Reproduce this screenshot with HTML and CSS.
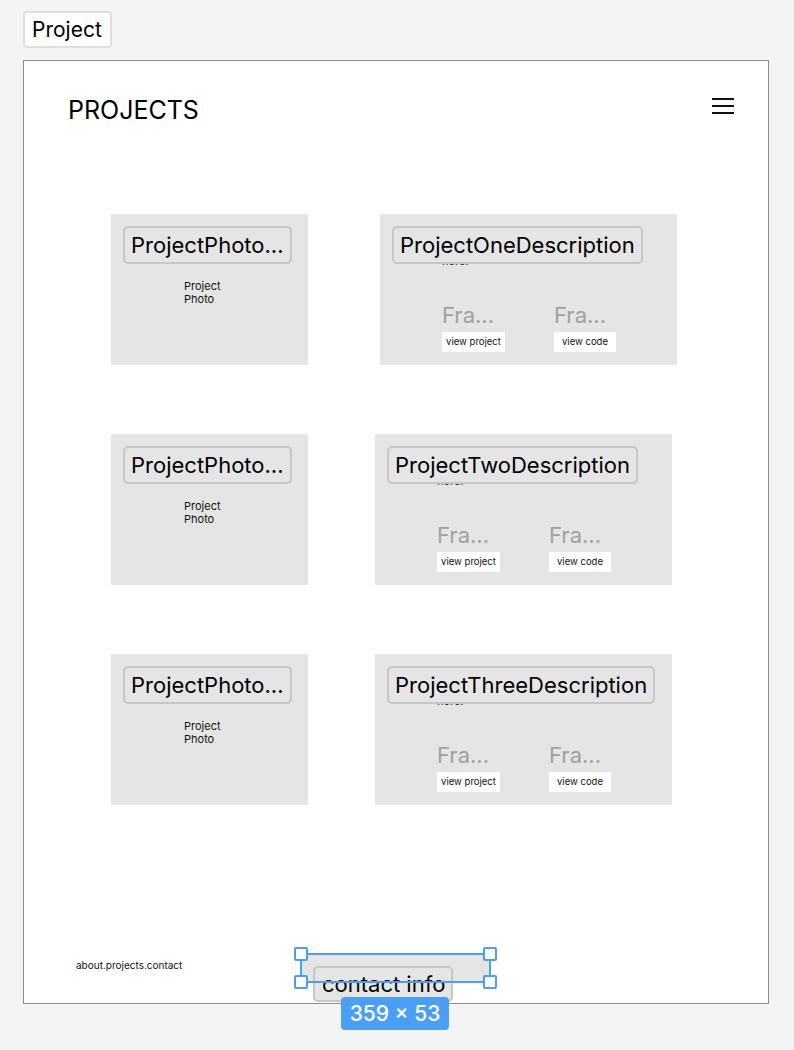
FILE: index.html
```html
<!DOCTYPE html>
<html lang="en">
<head>
<meta charset="utf-8">
<title>Project</title>
<link rel="stylesheet" href="styles.css">
</head>
<body>
  <div class="tab">Project</div>
  <div class="frame">
    <header class="header">
      <h1 class="title">PROJECTS</h1>
      <svg class="menu" width="22" height="16" viewBox="0 0 22 16" aria-hidden="true">
        <rect x="0" y="0" width="22" height="2" fill="#111"/>
        <rect x="0" y="7" width="22" height="2" fill="#111"/>
        <rect x="0" y="14" width="22" height="2" fill="#111"/>
      </svg>
    </header>

    <main class="list">
      <section class="row row-first">
        <div class="card photo">
          <div class="chip">ProjectPhoto...</div>
          <p class="photo-text">Project<br>Photo</p>
        </div>
        <div class="card desc">
          <div class="chip">ProjectOneDescription</div>
          <p class="blurb">here.</p>
          <div class="links">
            <div class="link"><div class="fra">Fra...</div><div class="btn">view project</div></div>
            <div class="link"><div class="fra">Fra...</div><div class="btn btn-code">view code</div></div>
          </div>
        </div>
      </section>

      <section class="row">
        <div class="card photo">
          <div class="chip">ProjectPhoto...</div>
          <p class="photo-text">Project<br>Photo</p>
        </div>
        <div class="card desc">
          <div class="chip">ProjectTwoDescription</div>
          <p class="blurb">here.</p>
          <div class="links">
            <div class="link"><div class="fra">Fra...</div><div class="btn">view project</div></div>
            <div class="link"><div class="fra">Fra...</div><div class="btn btn-code">view code</div></div>
          </div>
        </div>
      </section>

      <section class="row">
        <div class="card photo">
          <div class="chip">ProjectPhoto...</div>
          <p class="photo-text">Project<br>Photo</p>
        </div>
        <div class="card desc">
          <div class="chip">ProjectThreeDescription</div>
          <p class="blurb">here.</p>
          <div class="links">
            <div class="link"><div class="fra">Fra...</div><div class="btn">view project</div></div>
            <div class="link"><div class="fra">Fra...</div><div class="btn btn-code">view code</div></div>
          </div>
        </div>
      </section>
    </main>

    <footer class="footer">
      <p class="nav">about.projects.contact</p>
    </footer>

    <div class="sel-fill"></div>
    <div class="chip contact-chip">contact info</div>
    <div class="sel-box">
      <span class="handle h-tl"></span>
      <span class="handle h-tr"></span>
      <span class="handle h-bl"></span>
      <span class="handle h-br"></span>
    </div>
    <div class="dims">359 × 53</div>
  </div>
</body>
</html>
```

FILE: styles.css
```css
* { box-sizing: border-box; }

html, body {
  margin: 0;
  padding: 0;
}

body {
  background: #f4f4f4;
  font-family: Inter, "Noto Sans", "Liberation Sans", sans-serif;
  color: #000;
  padding: 11px 0 0 23px;
  width: 794px;
  height: 1050px;
  overflow: hidden;
}

.tab {
  display: inline-flex;
  align-items: center;
  height: 37px;
  padding: 0 8px 0 7px;
  background: #fff;
  border: 2px solid #dedede;
  border-radius: 4px;
  font-size: 21px;
  line-height: 1;
}

.frame {
  position: relative;
  margin-top: 12px;
  width: 746px;
  height: 944px;
  background: #fff;
  border: 1px solid #8c8c8c;
  display: flex;
  flex-direction: column;
}

.header {
  display: flex;
  justify-content: space-between;
  align-items: flex-start;
  padding: 34px 34px 0 44px;
}

.title {
  margin: 0;
  font-size: 25px;
  line-height: 30px;
  font-weight: 400;
  letter-spacing: 0;
}

.menu {
  display: block;
  margin-top: 3px;
}

.list {
  margin-top: 89px;
  padding-left: 87px;
  display: flex;
  flex-direction: column;
  gap: 69px;
}

.row {
  display: flex;
  gap: 67px;
}

.row-first {
  gap: 72px;
}

.card {
  position: relative;
  height: 151px;
  background: #e5e5e5;
  border-radius: 1px;
}

.photo {
  width: 197px;
  padding: 66px 0 0 73px;
}

.desc {
  width: 297px;
  padding: 41px 0 0 62px;
}

.chip {
  position: absolute;
  left: 12px;
  top: 12px;
  height: 38px;
  padding: 0 6px;
  display: flex;
  align-items: center;
  background: #e5e5e5;
  border: 2px solid #c6c6c6;
  border-radius: 5px;
  font-size: 22px;
  line-height: 1;
  white-space: nowrap;
  z-index: 2;
}

.photo-text {
  margin: 0;
  font-size: 11px;
  line-height: 13px;
  color: #111;
}

.blurb {
  margin: 0;
  font-size: 11px;
  line-height: 13px;
  color: #222;
}

.links {
  margin-top: 34px;
  display: grid;
  grid-template-columns: 112px auto;
}

.fra {
  font-size: 22px;
  line-height: 27px;
  color: #a0a0a0;
}

.btn {
  margin-top: 3px;
  width: 63px;
  height: 20px;
  background: #fff;
  font-size: 9.5px;
  line-height: 20px;
  text-align: center;
  color: #111;
}

.btn-code {
  width: 62px;
}

.footer {
  margin-top: auto;
  padding: 0 0 32px 52px;
}

.nav {
  margin: 0;
  font-size: 10px;
  line-height: 12px;
  color: #111;
}

.sel-fill {
  position: absolute;
  left: 276px;
  top: 892px;
  width: 191px;
  height: 30px;
  background: #e5e5e5;
}

.contact-chip {
  left: 289px;
  top: 905px;
  width: 140px;
  height: 36px;
  padding: 0 0 0 7px;
  z-index: 3;
}

.sel-box {
  position: absolute;
  left: 276px;
  top: 892px;
  width: 191px;
  height: 30px;
  border: 2px solid #4a9ff5;
  z-index: 4;
}

.handle {
  position: absolute;
  width: 14px;
  height: 14px;
  background: #fff;
  border: 2px solid #4a9ff5;
  border-radius: 2px;
}

.h-tl { left: -8px; top: -8px; }
.h-tr { right: -8px; top: -8px; }
.h-bl { left: -8px; bottom: -8px; }
.h-br { right: -8px; bottom: -8px; }

.dims {
  position: absolute;
  left: 317px;
  top: 936px;
  width: 108px;
  height: 33px;
  background: #4a9ff5;
  border-radius: 4px;
  color: #fff;
  font-size: 21px;
  font-weight: 500;
  line-height: 33px;
  text-align: center;
  z-index: 5;
}
```
